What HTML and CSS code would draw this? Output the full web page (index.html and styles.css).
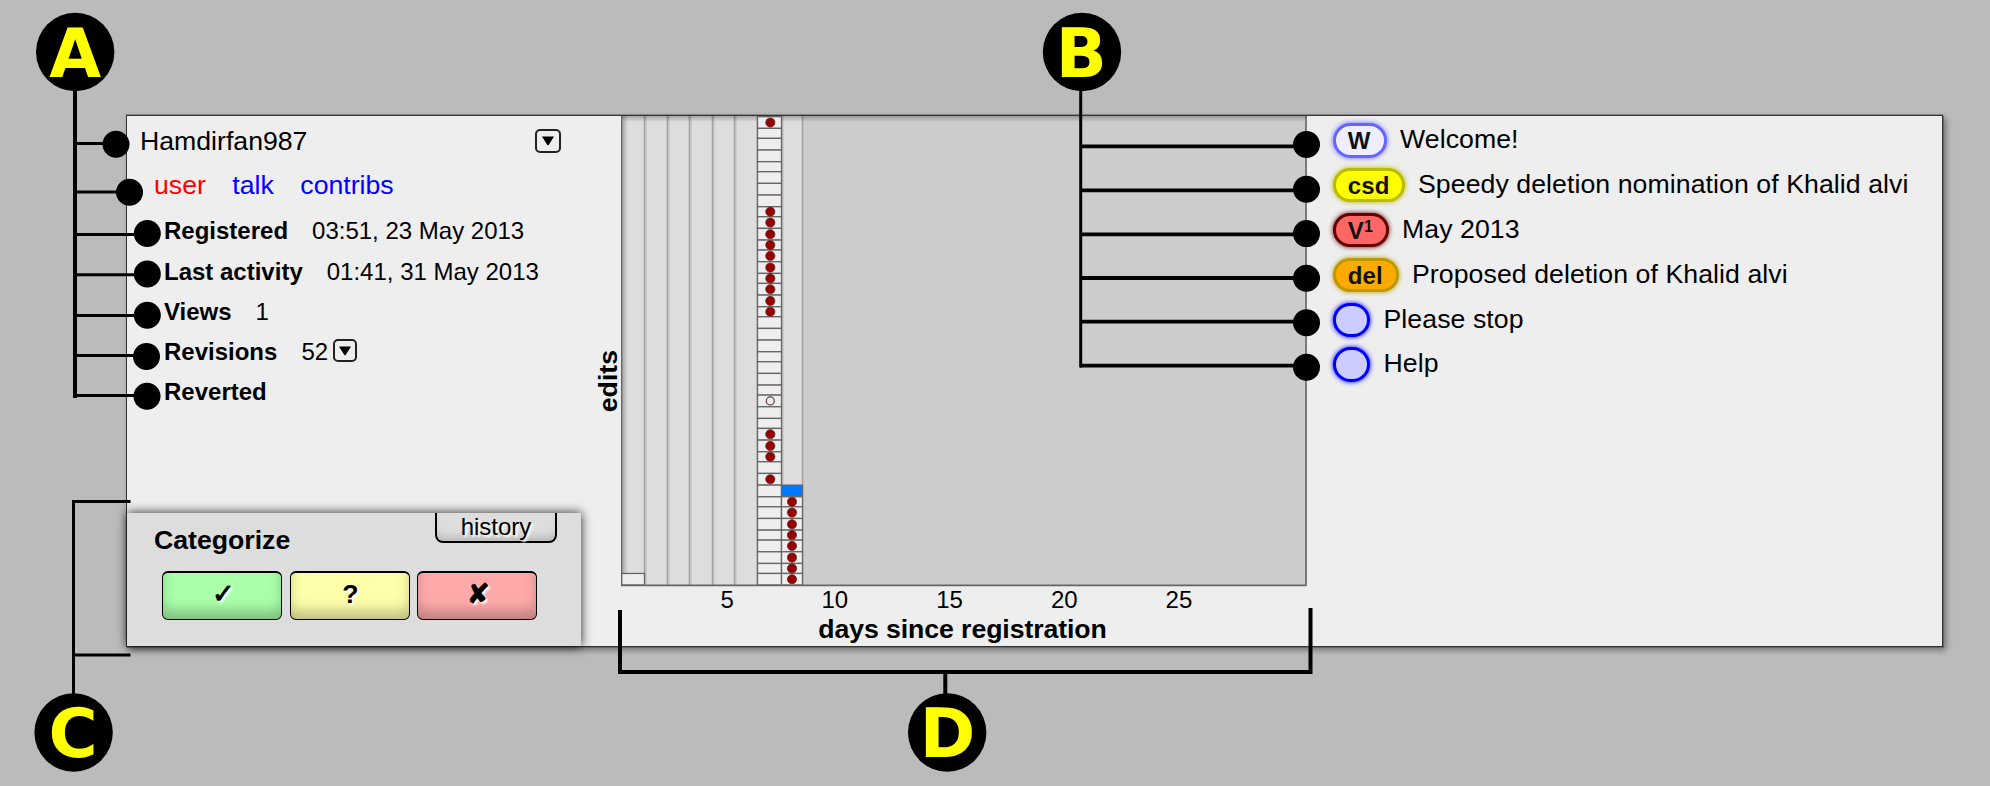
FILE: index.html
```html
<!DOCTYPE html>
<html lang="en">
<head>
<meta charset="utf-8">
<title>User information panel</title>
<link rel="stylesheet" href="styles.css">
</head>
<body>
<main class="panel">
  <section class="profile">
    <div class="info">
      <header class="name-row"><span>Hamdirfan987</span>
        <button class="drop" aria-label="User menu"><svg width="12" height="10" viewBox="0 0 12 10"><path d="M0 .5h12L7 8.500 6 9.500 5 8.500z"/></svg></button>
      </header>
      <nav class="links"><a class="missing">user</a><a>talk</a><a>contribs</a></nav>
      <dl class="facts">
        <div class="fact first"><dt>Registered</dt><dd>03:51, 23 May 2013</dd></div>
        <div class="fact"><dt>Last activity</dt><dd>01:41, 31 May 2013</dd></div>
        <div class="fact"><dt>Views</dt><dd>1</dd></div>
        <div class="fact"><dt>Revisions</dt><dd>52</dd><button class="drop small" aria-label="Revisions menu"><svg width="12" height="10" viewBox="0 0 12 10"><path d="M0 .5h12L7 8.500 6 9.500 5 8.500z"/></svg></button></div>
        <div class="fact"><dt>Reverted</dt></div>
      </dl>
    </div>
    <section class="categorize">
      <div class="cat-head"><h2>Categorize</h2><span class="history">history</span></div>
      <div class="cat-buttons">
        <button class="cat good">✓</button><button class="cat unsure">?</button><button class="cat bad">✘</button>
      </div>
    </section>
  </section>
  <div class="y-title"><span>edits</span></div>
  <section class="chart">
    <svg id="plot" class="plot" width="686" height="471" viewBox="621 116 686 471"></svg>
    <div class="ticks"><span>5</span><span>10</span><span>15</span><span>20</span><span>25</span></div>
    <div class="x-title">days since registration</div>
  </section>
  <ul class="messages">
    <li><span class="badge welcome">W</span><span>Welcome!</span></li>
    <li><span class="badge csd">csd</span><span>Speedy deletion nomination of Khalid alvi</span></li>
    <li><span class="badge vandal">V<sup>1</sup></span><span>May 2013</span></li>
    <li><span class="badge del">del</span><span>Proposed deletion of Khalid alvi</span></li>
    <li><span class="badge plain"></span><span>Please stop</span></li>
    <li><span class="badge plain"></span><span>Help</span></li>
  </ul>
</main>
<svg class="callouts" width="1990" height="786" viewBox="0 0 1990 786">
  <g class="wires">
    <path stroke-width="4" d="M75 90V398"/>
    <path d="M73 143.5H116M73 192H129M73 234.5H147M73 274.7H147M73 315.5H147M73 355.5H147M73 395.5H147"/>
    <path d="M1080.7 90V367.5"/>
    <path stroke-width="3.8" d="M1080 146.4H1306M1080 190.4H1306M1080 234.3H1306M1080 278H1306M1080 321.7H1306M1080 365.6H1306"/>
    <path d="M130.5 501.5H73.5V694M73.5 655H130.5"/>
    <path stroke-width="4" d="M620 610V672H1310.500V608M945.300 672V696"/>
  </g>
  <g>
    <circle cx="116" cy="144.300" r="13.500"/><circle cx="129.500" cy="192.300" r="13.500"/><circle cx="147.300" cy="233.500" r="13.500"/><circle cx="147.300" cy="274" r="13.500"/><circle cx="147.300" cy="315.300" r="13.500"/><circle cx="146.500" cy="356.500" r="13.500"/><circle cx="147" cy="396.300" r="13.500"/>
    <circle cx="1306.500" cy="144.500" r="13.500"/><circle cx="1306.500" cy="189.200" r="13.500"/><circle cx="1306.500" cy="233.600" r="13.500"/><circle cx="1306.500" cy="278.300" r="13.500"/><circle cx="1306.500" cy="322.700" r="13.500"/><circle cx="1306.500" cy="367.300" r="13.500"/>
    <circle cx="75.200" cy="52" r="39.200"/><circle cx="1082" cy="52" r="39.200"/><circle cx="73.600" cy="732.500" r="39.200"/><circle cx="947.200" cy="732.500" r="39.200"/>
  </g>
  <g class="letters">
    <text x="75.300" y="77">A</text><text x="1081.300" y="77">B</text><text x="73" y="757.200">C</text><text x="947.500" y="757.200">D</text>
  </g>
</svg>
<script src="chart.js"></script>
</body>
</html>
```
FILE: styles.css
```css
* { box-sizing: border-box; }
body {
  margin: 0;
  width: 1990px;
  height: 786px;
  padding: 115px 0 0 126px;
  position: relative;
  overflow: hidden;
  background: #bbb;
  color: #000;
  font: 26.67px/30px "Liberation Sans", Arial, sans-serif;
}
h2, dl, dd, ul { margin: 0; padding: 0; }
button { font: inherit; color: #000; padding: 0; }

.panel {
  display: grid;
  grid-template-columns: 468px 26px 686px 1fr;
  width: 1817px;
  height: 532px;
  border: 1px solid #333;
  background: #eee;
  box-shadow: 0 -1px 0 #888, 1px 1px 0 #666, 3px 3px 6px rgba(0, 0, 0, .4);
}

.profile { display: flex; flex-direction: column; justify-content: space-between; }
.info { padding: 10px 0 0 13px; }
.name-row { display: flex; width: 421px; height: 30px; justify-content: space-between; align-items: center; }
.drop {
  display: flex; align-items: center; justify-content: center;
  width: 26px; height: 24px;
  border: 2px solid #222; border-radius: 5px;
  background: #eee;
}
.drop.small { width: 24px; height: 23px; margin: 0 0 3px 5px; }
.links { display: flex; gap: 26.500px; padding: 14px 0 0 14px; color: #00f; }
.missing { color: #f00; }
.facts { padding: 9px 0 0 24px; font-size: 24px; }
.fact { display: flex; align-items: center; height: 40px; }
.fact.first { height: 43px; }
.fact dt { font-weight: bold; }
.fact dd { margin-left: 24px; }

.categorize {
  width: 454px; height: 133px;
  padding: 0 28px 0 27px;
  background: #ddd;
  box-shadow: 0 0 10px rgba(0, 0, 0, .85);
}
.cat-head { display: flex; justify-content: space-between; height: 58px; }
.cat-head h2 { font-size: 26.67px; line-height: 30px; padding-top: 12px; }
.history {
  width: 122px; height: 30px;
  margin-right: -4px;
  border: 2px solid #000; border-top: 0; border-radius: 0 0 8px 8px;
  text-align: center; font-size: 24px; line-height: 27px;
  text-shadow: 2px 2px 2px #fff;
  box-shadow: inset 0 -7px 8px -4px rgba(0, 0, 0, .2);
}
.cat-buttons { display: flex; gap: 7.500px; padding-left: 8px; }
.cat {
  width: 120px; height: 49px; flex: none;
  border: 1.500px solid #000; border-top-width: 2px; border-radius: 6px;
  font-weight: bold; line-height: 40px;
  padding: 0 0 4px 2px;
  text-shadow: 2px 2px 2px rgba(255, 255, 255, .9);
  box-shadow: inset 0 -10px 14px -2px rgba(0, 0, 0, .26);
}
.good { background: #afa; }
.unsure { background: #ffa; }
.bad { background: #faa; }

.y-title { display: flex; align-items: center; justify-content: center; font-weight: bold; }
.y-title span { writing-mode: vertical-rl; transform: rotate(180deg); }

.plot { display: block; }
.ticks { display: flex; height: 30px; padding-left: 99.500px; font-size: 24px; line-height: 26px; }
.ticks span { width: 114.700px; }
.ticks span:first-child { width: 101px; }
.x-title { text-align: center; font-weight: bold; padding-right: 3px; line-height: 24px; letter-spacing: -.08px; }

.messages { list-style: none; padding: 6px 0 0 25.500px; }
.messages li { display: flex; gap: 13.500px; height: 44.900px; white-space: nowrap; letter-spacing: .07px; }
.messages li > span:last-child { line-height: 34px; }
.badge {
  height: 34.500px; margin-top: 1px;
  padding: 0 12.300px;
  border: 3px solid; border-radius: 17.500px;
  font-size: 24px; font-weight: bold; line-height: 30px;
}
.badge sup { font-size: 16px; line-height: 0; vertical-align: 7px; }
.welcome { width: 54px; background: #eef; border-color: #66f; box-shadow: 0 0 5px #66f; }
.csd { width: 72px; background: #ff0; border-color: #bb0; box-shadow: 0 0 5px #bb0; }
.vandal { width: 56px; background: #f66; border-color: #600; box-shadow: 0 0 5px #600; }
.del { width: 66px; background: #fa0; border-color: #b90; box-shadow: 0 0 5px #b90; }
.plain { width: 37.500px; background: #ccf; border-color: #00f; box-shadow: 0 0 5px #00f; }
.welcome, .csd, .vandal, .del { color: #111; }

.callouts { position: absolute; left: 0; top: 0; }
.wires { fill: none; stroke: #000; stroke-width: 3; }
.letters { fill: #ff0; font: bold 67px "DejaVu Sans", sans-serif; text-anchor: middle; }
```
FILE: chart.js
```js
// Edits per day: one column per day, one cell per edit.
const xs = [621.5, 644.5, 667.5, 689.5, 712.5, 734.5, 757.5, 781.5, 802.5];
const top0 = 116.7, bottom = 585.3, rows = 42;
const y = i => top0 + Math.round((bottom - top0) * i / rows / 1.667) * 1.667;
const parts = [];
parts.push('<defs><linearGradient id="t" x2="0" y2="1"><stop stop-color="#000" stop-opacity=".25"/><stop offset="1" stop-opacity="0"/></linearGradient><linearGradient id="l"><stop stop-color="#000" stop-opacity=".3"/><stop offset="1" stop-opacity="0"/></linearGradient></defs>');
parts.push('<rect x="621" y="116" width="686" height="470" fill="#ccc"/><rect x="621" y="116" width="181.500" height="470" fill="#ddd"/>');
xs.slice(1).forEach(x => parts.push(`<rect x="${x - 1.5}" y="116" width="4" height="469" fill="#ccc"/><rect x="${x - .5}" y="116" width="1.300" height="469" fill="#a2a2a2"/>`));
parts.push('<rect x="621" y="116" width="686" height="6" fill="url(#t)"/><rect x="621" y="116" width="7" height="470" fill="url(#l)"/>');
const cell = (c, r, fill) => parts.push(`<rect x="${xs[c]}" y="${y(r)}" width="${xs[c + 1] - xs[c]}" height="${y(r + 1) - y(r)}" fill="${fill}" stroke="#666" stroke-width="1.300"/>`);
const dot = (cx, r, hollow) => parts.push(`<circle cx="${cx}" cy="${(y(r) + y(r + 1)) / 2}" r="${hollow ? 4 : 4.6}" ${hollow ? 'fill="#eee" stroke="#6b4545" stroke-width="1.300"' : 'fill="#900" stroke="#533" stroke-width=".8"'}/>`);
const reverted = [0, 8, 9, 10, 11, 12, 13, 14, 15, 16, 17, 28, 29, 30, 32];
cell(0, 41, '#eee');
for (let r = 0; r < rows; r++) cell(6, r, '#eee');
for (let r = 33; r < rows; r++) cell(7, r, r === 33 ? '#07f' : '#eee');
reverted.forEach(r => dot(770.3, r));
dot(770.3, 25, true);
for (let r = 34; r < rows; r++) dot(792, r);
parts.push('<path d="M621.500 116V585.400H1306V116" fill="none" stroke="#666" stroke-width="1.600"/>');
document.getElementById('plot').innerHTML = parts.join('');
```
